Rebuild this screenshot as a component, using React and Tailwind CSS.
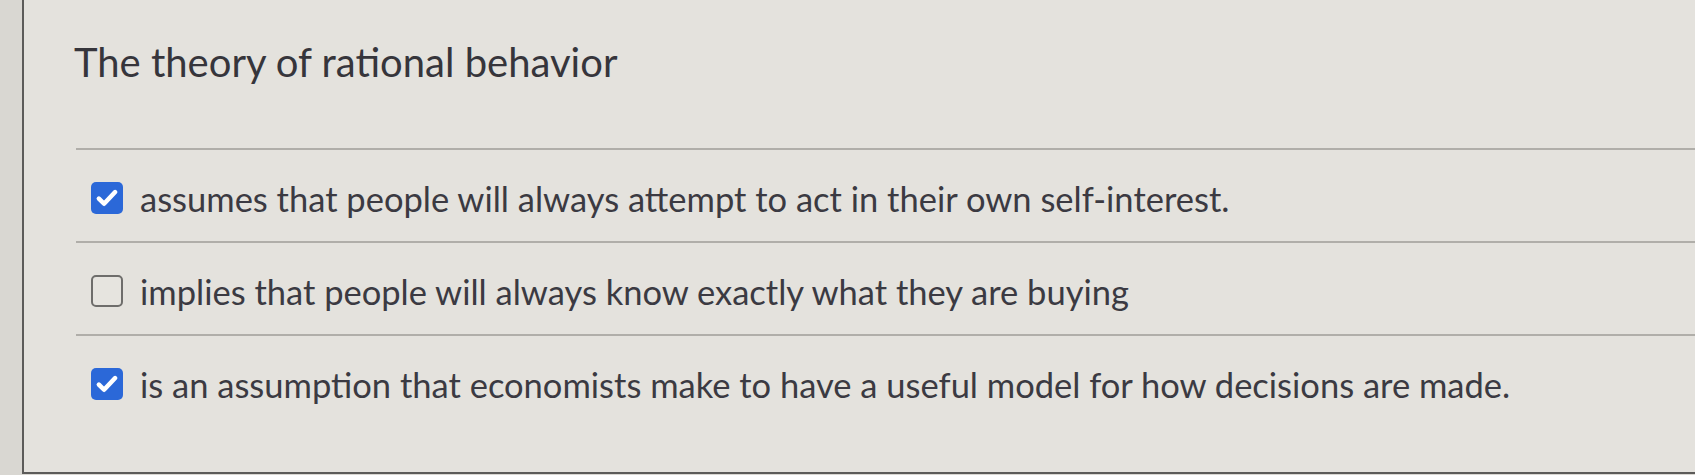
const options = [
  { text: "assumes that people will always attempt to act in their own self-interest.", checked: true },
  { text: "implies that people will always know exactly what they are buying", checked: false },
  { text: "is an assumption that economists make to have a useful model for how decisions are made.", checked: true },
];

function Checkbox({ checked }) {
  if (!checked) {
    return <div className="w-[32px] h-[32px] shrink-0 rounded-[5px] border-2 border-[#6e6d6b] bg-[#e6e4df]" />;
  }
  return (
    <div className="w-[32px] h-[32px] shrink-0 rounded-[5px] bg-[#2b68d8] flex items-center justify-center">
      <svg width="26" height="26" viewBox="0 0 24 24" fill="none">
        <path d="M4.5 12.5l4.8 4.8L19.5 6.5" stroke="white" strokeWidth="4.2" strokeLinecap="round" strokeLinejoin="round" />
      </svg>
    </div>
  );
}

export default function App() {
  return (
    <div
      className="w-[1695px] h-[475px] flex bg-[#d9d7d2] overflow-hidden"
      style={{ fontFamily: "Lato, 'Open Sans', sans-serif" }}
    >
      <div className="w-[22px] shrink-0" />
      <div className="flex-1 h-[474px] border-l-2 border-b-2 border-[#5c5b59] bg-[#e4e2dd] flex flex-col">
        {/* Question title */}
        <h1 className="pl-[50px] pt-[38px] text-[40px] leading-[1.2] text-[#36353b]">The theory of rational behavior</h1>

        {/* Answer options */}
        <div className="mt-[62px] ml-[52px] flex flex-col">
          {options.map((o, i) => (
            <div key={i} className="h-[93px] border-t-2 border-[#b0aea9] flex items-center pl-[15px] pt-[4px] gap-[17px]">
              <Checkbox checked={o.checked} />
              <span className="text-[34.5px] leading-[1.2] text-[#3b3a42] pt-[2px]">{o.text}</span>
            </div>
          ))}
        </div>
      </div>
    </div>
  );
}
